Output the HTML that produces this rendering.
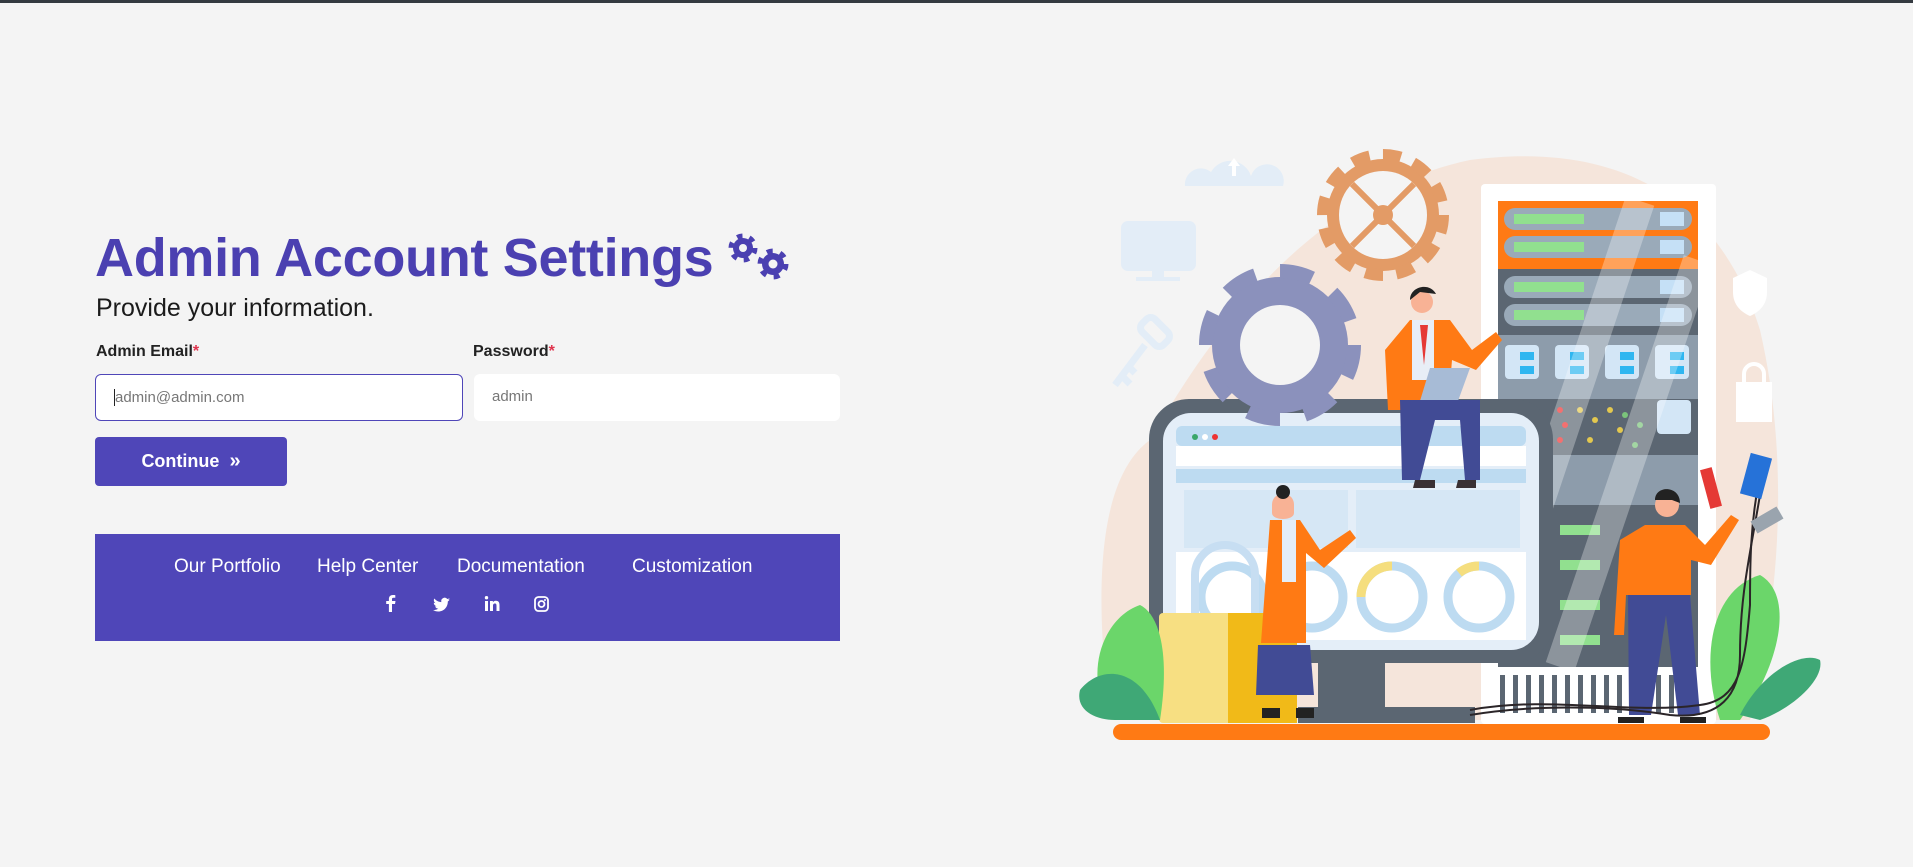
<!DOCTYPE html>
<html><head><meta charset="utf-8"><style>
html,body{margin:0;padding:0}
body{width:1913px;height:867px;background:#f4f4f4;position:relative;overflow:hidden;font-family:"Liberation Sans",sans-serif}
.top{position:absolute;left:0;top:0;width:1913px;height:3px;background:#343a40}
.abs{position:absolute}
h1{position:absolute;left:95px;top:227px;margin:0;font-size:54px;font-weight:bold;color:#4b40b1;letter-spacing:-0.3px;white-space:nowrap}
.sub{left:96px;top:294px;font-size:25px;color:#1b1b1b}
.lbl{top:343px;font-size:16px;font-weight:bold;color:#222}
.lbl span{color:#e0344e}
.inp{top:374px;height:47px;background:#fff;border-radius:6px;box-sizing:border-box;font-size:15px;color:#777;line-height:46px}
.btn{left:95px;top:437px;width:192px;height:49px;background:#4f46b8;border-radius:4px;color:#fff;font-weight:bold;font-size:18px;text-align:center;line-height:49px}
.foot{left:95px;top:534px;width:745px;height:107px;background:#4f46b8;color:#fff}
.foot a{position:absolute;top:22px;font-size:19px;color:#fff;text-decoration:none;white-space:nowrap}
</style></head><body>
<div class="top"></div>
<h1>Admin Account Settings</h1>
<svg class="abs" style="left:725px;top:230px" width="70" height="55" viewBox="725 230 70 55">
<g fill="#4b40b1">
<circle cx="743" cy="248" r="10"/><circle cx="743" cy="248" r="11" fill="none" stroke="#4b40b1" stroke-width="7" stroke-dasharray="5 6.5"/>
<circle cx="773" cy="264" r="11"/><circle cx="773" cy="264" r="12" fill="none" stroke="#4b40b1" stroke-width="7" stroke-dasharray="5.5 7.1"/>
</g>
<circle cx="743" cy="248" r="4" fill="#f4f4f4"/><circle cx="773" cy="264" r="4.5" fill="#f4f4f4"/>
</svg>
<div class="abs sub">Provide your information.</div>
<div class="abs lbl" style="left:96px">Admin Email<span>*</span></div>
<div class="abs lbl" style="left:473px">Password<span>*</span></div>
<div class="abs inp" style="left:95px;width:368px;border:1.5px solid #4f46b8;padding-left:18px"><span style="border-left:1px solid #222;">admin@admin.com</span></div>
<div class="abs inp" style="left:474px;width:366px;padding-left:18px">admin</div>
<div class="abs btn">Continue &nbsp;<span style="font-size:20px">»</span></div>
<div class="abs foot">
<a style="left:79px">Our Portfolio</a><a style="left:222px">Help Center</a><a style="left:362px">Documentation</a><a style="left:537px">Customization</a>
<svg class="abs" style="left:280px;top:58px" width="200" height="24" viewBox="0 0 200 24">
<path d="M17 20v-8h3l.5-3H17V7.2c0-.9.3-1.5 1.6-1.5h1.7V3.1c-.3 0-1.3-.1-2.4-.1-2.4 0-4 1.4-4 4.1V9h-2.7v3h2.7v8z" fill="#fff"/>
<path d="M75 7.5c-.6.3-1.3.5-2 .6.7-.4 1.3-1.1 1.5-1.9-.7.4-1.4.7-2.2.8a3.4 3.4 0 0 0-5.9 3.1c-2.9-.1-5.4-1.5-7.1-3.6-.9 1.6-.4 3.6 1.1 4.6-.6 0-1.1-.2-1.6-.4 0 1.7 1.2 3.1 2.8 3.4-.5.1-1 .2-1.5.1.4 1.4 1.7 2.4 3.2 2.4A7 7 0 0 1 58 18c1.5 1 3.3 1.5 5.2 1.5 6.3 0 9.8-5.3 9.6-10 .7-.5 1.3-1.1 1.8-1.8z" fill="#fff"/>
<path d="M110 9h3v10h-3zM111.5 4a1.7 1.7 0 1 1 0 3.4 1.7 1.7 0 0 1 0-3.4zM115 9h2.9v1.4c.4-.8 1.4-1.6 2.9-1.6 3.1 0 3.7 2 3.7 4.7V19h-3v-4.9c0-1.2 0-2.6-1.6-2.6s-1.9 1.2-1.9 2.5v5h-3z" fill="#fff"/>
<rect x="160" y="5" width="13" height="14" rx="3.5" fill="none" stroke="#fff" stroke-width="1.8"/><circle cx="166.5" cy="12" r="3" fill="none" stroke="#fff" stroke-width="1.8"/><circle cx="170" cy="8" r="1" fill="#fff"/>
</svg>
</div>

<svg class="abs" style="left:0;top:0" width="1913" height="867" viewBox="0 0 1913 867">
<path d="M1110 720 C1095 600 1095 480 1150 440 C1230 300 1330 190 1470 160 C1620 140 1720 200 1760 330 C1790 460 1780 600 1750 720 Z" fill="#f5e5db"/>
<path d="M1185 186 a16 16 0 0 1 26 -14 a22 22 0 0 1 40 4 a14 14 0 0 1 32 10z" fill="#e3edf7"/>
<path d="M1228 166 l6 -8 6 8 h-4 v10 h-4 v-10z" fill="#fff"/>
<rect x="1121" y="221" width="75" height="50" rx="7" fill="#e3edf7"/><rect x="1152" y="271" width="12" height="8" fill="#e3edf7"/><rect x="1136" y="277" width="44" height="4" fill="#e3edf7"/>
<g stroke="#e3edf7" stroke-width="7" fill="none"><rect x="1140" y="323" width="30" height="18" rx="6" transform="rotate(45 1155 332)"/><path d="M1145 345 L1115 385 M1122 376 l8 8 M1129 367 l6 6"/></g>
<path d="M1750 270 l17 8 v14 c0 13 -8 20 -17 24 c-9 -4 -17 -11 -17 -24 v-14z" fill="#fff"/>
<rect x="1736" y="382" width="36" height="40" fill="#fff"/><path d="M1744 382 v-8 a10 10 0 0 1 20 0 v8" stroke="#fff" stroke-width="4" fill="none"/>
<circle cx="1383" cy="215" r="56" fill="#e39b66"/>
<circle cx="1383" cy="215" r="60" fill="none" stroke="#e39b66" stroke-width="12" stroke-dasharray="18 13.4"/>
<circle cx="1383" cy="215" r="44" fill="#f4f4f4"/>
<g stroke="#e39b66" stroke-width="6"><path d="M1352 184 L1414 246 M1414 184 L1352 246"/></g>
<circle cx="1383" cy="215" r="10" fill="#e39b66"/>
<rect x="1481" y="184" width="235" height="540" rx="4" fill="#fff"/>
<rect x="1498" y="201" width="200" height="466" fill="#5b6672"/>
<rect x="1498" y="201" width="200" height="68" fill="#ff7a14"/>
<g fill="#9aaab9"><rect x="1504" y="208" width="188" height="22" rx="11"/><rect x="1504" y="236" width="188" height="22" rx="11"/><rect x="1504" y="276" width="188" height="22" rx="11"/><rect x="1504" y="304" width="188" height="22" rx="11"/></g>
<g fill="#91e08f"><rect x="1514" y="214" width="70" height="10"/><rect x="1514" y="242" width="70" height="10"/><rect x="1514" y="282" width="70" height="10"/><rect x="1514" y="310" width="70" height="10"/></g>
<g fill="#c5e0f6"><rect x="1660" y="212" width="24" height="14"/><rect x="1660" y="240" width="24" height="14"/><rect x="1660" y="280" width="24" height="14"/><rect x="1660" y="308" width="24" height="14"/></g>
<rect x="1498" y="335" width="200" height="64" fill="#8d9cab"/>
<g fill="#d3e6f6"><rect x="1505" y="345" width="34" height="34" rx="4"/><rect x="1555" y="345" width="34" height="34" rx="4"/><rect x="1605" y="345" width="34" height="34" rx="4"/><rect x="1655" y="345" width="34" height="34" rx="4"/>
<rect x="1657" y="400" width="34" height="34" rx="4"/><rect x="1555" y="462" width="34" height="34" rx="4"/><rect x="1605" y="462" width="34" height="34" rx="4"/><rect x="1655" y="462" width="34" height="34" rx="4"/></g>
<g fill="#2fb6f0"><rect x="1520" y="352" width="14" height="8"/><rect x="1520" y="366" width="14" height="8"/><rect x="1570" y="352" width="14" height="8"/><rect x="1570" y="366" width="14" height="8"/><rect x="1620" y="352" width="14" height="8"/><rect x="1620" y="366" width="14" height="8"/><rect x="1670" y="352" width="14" height="8"/><rect x="1670" y="366" width="14" height="8"/></g>
<rect x="1498" y="455" width="200" height="50" fill="#8d9cab"/>
<g fill="#e3c84f"><circle cx="1580" cy="410" r="3"/><circle cx="1595" cy="420" r="3"/><circle cx="1610" cy="410" r="3"/><circle cx="1590" cy="440" r="3"/><circle cx="1620" cy="430" r="3"/></g>
<g fill="#e33"><circle cx="1560" cy="410" r="3"/><circle cx="1565" cy="425" r="3"/><circle cx="1560" cy="440" r="3"/></g>
<g fill="#7bc47b"><circle cx="1625" cy="415" r="3"/><circle cx="1640" cy="425" r="3"/><circle cx="1635" cy="445" r="3"/></g>
<g fill="#91e08f"><rect x="1560" y="525" width="40" height="10"/><rect x="1560" y="560" width="40" height="10"/><rect x="1560" y="600" width="40" height="10"/><rect x="1560" y="635" width="40" height="10"/></g>
<g stroke="#fff" stroke-opacity=".3" stroke-width="30"><path d="M1500 620 L1640 201 M1560 667 L1698 260"/></g>
<g fill="#5b6672"><rect x="1500" y="675" width="5" height="38"/><rect x="1513" y="675" width="5" height="38"/><rect x="1526" y="675" width="5" height="38"/><rect x="1539" y="675" width="5" height="38"/><rect x="1552" y="675" width="5" height="38"/><rect x="1565" y="675" width="5" height="38"/><rect x="1578" y="675" width="5" height="38"/><rect x="1591" y="675" width="5" height="38"/><rect x="1604" y="675" width="5" height="38"/><rect x="1617" y="675" width="5" height="38"/><rect x="1630" y="675" width="5" height="38"/><rect x="1643" y="675" width="5" height="38"/><rect x="1656" y="675" width="5" height="38"/><rect x="1669" y="675" width="5" height="38"/><rect x="1682" y="675" width="5" height="38"/></g>
<rect x="1149" y="399" width="404" height="264" rx="40" fill="#5b6672"/>
<rect x="1163" y="413" width="376" height="237" rx="28" fill="#e4eef8"/>
<rect x="1176" y="426" width="350" height="20" rx="6" fill="#bddbf1"/>
<circle cx="1195" cy="437" r="3" fill="#3aa66a"/><circle cx="1205" cy="437" r="3" fill="#fff"/><circle cx="1215" cy="437" r="3" fill="#e33"/>
<rect x="1176" y="446" width="350" height="20" fill="#fff"/>
<rect x="1176" y="469" width="350" height="14" fill="#bddbf1"/>
<rect x="1184" y="490" width="164" height="58" fill="#d6e7f5"/><rect x="1356" y="490" width="164" height="58" fill="#d6e7f5"/>
<rect x="1176" y="552" width="350" height="88" fill="#fff"/>
<g fill="none" stroke="#bddbf1" stroke-width="9"><circle cx="1232" cy="597" r="31"/><circle cx="1312" cy="597" r="31"/><circle cx="1392" cy="597" r="31"/><circle cx="1479" cy="597" r="31"/></g>
<path d="M1392 566 a31 31 0 0 0 -31 31" fill="none" stroke="#f5de7e" stroke-width="9"/>
<path d="M1479 566 a31 31 0 0 0 -20 7" fill="none" stroke="#f5de7e" stroke-width="9"/>
<path d="M1318 650 h67 v57 h90 v16 h-177 v-16 h20z" fill="#5b6672"/>
<circle cx="1280" cy="345" r="68" fill="#8b91bc"/>
<circle cx="1280" cy="345" r="74" fill="none" stroke="#8b91bc" stroke-width="14" stroke-dasharray="33 25.1"/>
<circle cx="1280" cy="345" r="40" fill="#f4f4f4"/>
<path d="M1195 615 v-40 a30 30 0 0 1 60 0 v40" fill="none" stroke="#c7def2" stroke-width="8"/>
<rect x="1159" y="613" width="138" height="110" rx="4" fill="#f7df82"/>
<rect x="1228" y="613" width="69" height="110" fill="#f1ba18"/>
<path d="M1100 695 c-10-40 10-80 40-90 c20 10 30 50 20 115 h-40z" fill="#6bd66a"/>
<path d="M1080 690 c20-25 60-25 80 30 h-45 c-20 0-40-10-35-30z" fill="#3fa876"/>
<path d="M1720 720 c-20-60 -10-130 40-145 c35 20 20 90 -20 145z" fill="#6bd66a"/>
<path d="M1740 715 c20-40 60-65 80-55 c5 20-30 50-60 60z" fill="#3fa876"/>
<path d="M1385 350 l25 -30 h40 l22 30 l24 -18 l6 8 l-26 30 l-24 -10 l-4 50 h-60z" fill="#ff7a14"/>
<rect x="1412" y="320" width="22" height="60" fill="#e8eef6"/><path d="M1420 325 l4 40 l4 -40z" fill="#e53935"/>
<circle cx="1422" cy="302" r="11" fill="#f8b295"/><path d="M1410 300 c0-14 20-18 26-6 l-16 -2z" fill="#222"/>
<path d="M1430 368 h40 l-12 33 h-38z" fill="#a7bbd6"/>
<path d="M1400 400 h80 v80 h-15 l-5 -60 h-25 l-15 60 h-18z" fill="#414b95"/>
<path d="M1415 480 h20 v8 h-22z M1458 480 h18 v8 h-20z" fill="#3a3033"/>
<path d="M1272 505 c0-15 22-15 22 0 v8 c0 8-22 8-22 0z" fill="#f8b295"/><circle cx="1283" cy="492" r="7" fill="#222"/>
<path d="M1270 520 h30 l20 30 l30 -20 l6 8 l-32 30 l-18 -15 v90 h-45z" fill="#ff7a14"/>
<rect x="1282" y="520" width="14" height="62" fill="#e4eef8"/>
<path d="M1258 645 h52 l4 50 h-58z" fill="#414b95"/>
<path d="M1262 708 h18 v10 h-18z M1296 708 h18 v10 h-18z" fill="#222"/>
<circle cx="1667" cy="505" r="12" fill="#f8b295"/><path d="M1655 500 c0-15 25-15 25 3 l-8 -3z" fill="#222"/>
<path d="M1620 540 l25 -15 h40 l20 20 l26 -30 l8 5 l-28 45 l-20 -5 v35 h-65 l-2 40 h-10z" fill="#ff7a14"/>
<path d="M1628 595 h62 l10 120 h-22 l-12 -100 l-15 100 h-22z" fill="#414b95"/>
<path d="M1618 717 h26 v6 h-26z M1680 717 h26 v6 h-26z" fill="#222"/>
<g fill="none" stroke="#2b2528" stroke-width="2"><path d="M1470 715 c60-10 140-10 200 0 c50 5 70-20 70-60 c0-60 10-100 20-160"/><path d="M1470 710 c80-15 160 5 230 -5 c40 -5 45-40 50-100 c0-40 0-80 10-130"/></g>
<rect x="1705" y="468" width="12" height="40" fill="#e53935" transform="rotate(-15 1711 488)"/>
<rect x="1745" y="455" width="22" height="42" fill="#2672d8" transform="rotate(15 1756 476)"/>
<rect x="1760" y="505" width="14" height="30" fill="#9aa4ae" transform="rotate(60 1767 520)"/>
<rect x="1113" y="724" width="657" height="16" rx="8" fill="#ff7a14"/>
</svg>
</body></html>
